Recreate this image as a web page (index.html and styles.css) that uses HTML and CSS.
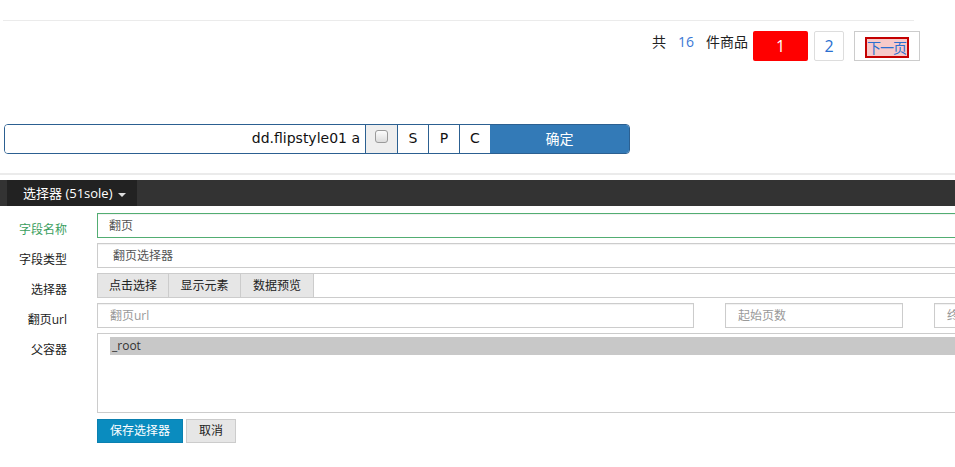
FILE: index.html
```html
<!DOCTYPE html>
<html lang="zh-CN">
<head>
<meta charset="utf-8">
<title>选择器</title>
<link rel="stylesheet" href="styles.css">
</head>
<body>
<div class="topline"></div>
<div class="pager">
  <span class="total">共<em>16</em>件商品</span>
  <a class="page current">1</a>
  <a class="page num">2</a>
  <a class="page next"><span>下一页</span></a>
</div>
<div class="selbar">
  <div class="selinput">dd.flipstyle01 a</div>
  <div class="cell chk"><span class="box"></span></div>
  <div class="cell">S</div>
  <div class="cell">P</div>
  <div class="cell">C</div>
  <div class="ok">确定</div>
</div>
<div class="sep"></div>
<div class="navbar">
  <div class="dropdown">选择器 (51sole) <span class="caret"></span></div>
</div>
<div class="form">
  <div class="label green">字段名称</div>
  <div class="field input focus">翻页</div>

  <div class="label">字段类型</div>
  <div class="field input indent">翻页选择器</div>

  <div class="label">选择器</div>
  <div class="field tabs">
    <span class="tab">点击选择</span>
    <span class="tab">显示元素</span>
    <span class="tab">数据预览</span>
  </div>

  <div class="label">翻页url</div>
  <div class="field multi">
    <div class="input ph url">翻页url</div>
    <div class="input ph start">起始页数</div>
    <div class="input ph end">终止页数</div>
  </div>

  <div class="label">父容器</div>
  <div class="field select">
    <div class="option">_root</div>
  </div>

  <div class="label"></div>
  <div class="field buttons">
    <span class="btn save">保存选择器</span>
    <span class="btn cancel">取消</span>
  </div>
</div>
</body>
</html>
```

FILE: styles.css
```css
html, body {
  margin: 0;
  padding: 0;
  background: #fff;
  overflow: hidden;
}
body {
  width: 955px;
  height: 467px;
  font-family: "Open Sans", "Noto Sans CJK SC", sans-serif;
  color: #333;
}

.topline {
  margin: 20px 0 0 3px;
  width: 911px;
  height: 1px;
  background: #ebebeb;
}

.pager {
  display: flex;
  justify-content: flex-end;
  align-items: flex-start;
  margin-top: 10px;
  padding-right: 35px;
  font-size: 14px;
}
.total {
  line-height: 22px;
  color: #222;
  margin-right: 5px;
}
.total em {
  font-style: normal;
  color: #3a78d6;
  margin: 0 12px;
}
.page {
  box-sizing: border-box;
  height: 30px;
  display: flex;
  align-items: center;
  justify-content: center;
  font-size: 16px;
}
.page.current {
  width: 55px;
  background: #ff0000;
  color: #fff;
  border-radius: 2px;
  margin-right: 6px;
}
.page.num {
  width: 30px;
  border: 1px solid #ddd;
  border-radius: 2px;
  color: #2a6fd0;
  margin-right: 10px;
}
.page.next {
  width: 66px;
  border: 1px solid #ccc;
  align-items: flex-start;
  padding-top: 5px;
}
.page.next span {
  display: block;
  box-sizing: border-box;
  height: 21px;
  border: 2px solid #c40000;
  background: #f6c9c9;
  color: #2a6fd0;
  font-size: 14px;
  line-height: 17px;
  letter-spacing: -1px;
  padding: 0 1px 0 0;
}

.selbar {
  display: flex;
  box-sizing: border-box;
  margin: 63px 0 0 4px;
  width: 626px;
  height: 30px;
  border: 1px solid #2c6091;
  border-radius: 4px;
  overflow: hidden;
  font-family: "DejaVu Sans", sans-serif;
  font-size: 14px;
  color: #111;
}
.selinput {
  flex: 0 0 360px;
  box-sizing: border-box;
  text-align: right;
  padding-right: 5px;
  line-height: 27px;
  background: #fff;
}
.cell {
  flex: 0 0 31px;
  box-sizing: border-box;
  border-left: 1px solid #2c6091;
  text-align: center;
  line-height: 27px;
  background: #fff;
}
.cell.chk {
  flex-basis: 32px;
  background: #eee;
  display: flex;
  justify-content: center;
  padding-top: 5px;
}
.box {
  display: block;
  width: 11px;
  height: 11px;
  border: 1px solid #9a9a9a;
  border-radius: 3px;
  background: linear-gradient(#fcfcfc, #dcdcdc);
}
.ok {
  flex: 1;
  background: #337ab7;
  color: #fff;
  text-align: center;
  line-height: 27px;
  font-family: "Noto Sans CJK SC", sans-serif;
  font-size: 14px;
}

.sep {
  margin-top: 19px;
  height: 2px;
  background: #ebebeb;
}
.navbar {
  margin-top: 5px;
  height: 26px;
  background: #333;
}
.dropdown {
  margin-left: 7px;
  width: 130px;
  box-sizing: border-box;
  height: 26px;
  background: #222;
  color: #fff;
  font-size: 13px;
  line-height: 26px;
  padding-left: 16px;
}
.caret {
  display: inline-block;
  width: 0;
  height: 0;
  border-left: 4px solid transparent;
  border-right: 4px solid transparent;
  border-top: 4px solid #ddd;
  vertical-align: middle;
  margin-left: 2px;
}

.form {
  display: grid;
  grid-template-columns: 67px 1000px;
  column-gap: 30px;
  row-gap: 5px;
  margin-top: 7px;
  font-size: 12px;
}
.label {
  text-align: right;
  padding-top: 8px;
  line-height: 17px;
  color: #222;
}
.label.green {
  color: #3a9e5e;
}
.input {
  box-sizing: border-box;
  height: 25px;
  border: 1px solid #ccc;
  box-shadow: inset 0 1px 1px rgba(0, 0, 0, 0.06);
  padding-left: 11px;
  line-height: 23px;
  color: #555;
  background: #fff;
}
.input.focus {
  border-color: #52ad72;
}
.input.indent {
  padding-left: 15px;
}
.tabs {
  display: flex;
  box-sizing: border-box;
  height: 25px;
  border: 1px solid #ccc;
}
.tab {
  width: 71px;
  box-sizing: border-box;
  border-right: 1px solid #ccc;
  background: #e6e6e6;
  text-align: center;
  line-height: 23px;
  color: #222;
}
.tab:nth-child(2) {
  width: 72px;
}
.tab:nth-child(3) {
  width: 73px;
}
.multi {
  display: grid;
  grid-template-columns: 597px 178px 1fr;
  column-gap: 31px;
}
.ph {
  color: #999;
  padding-left: 12px;
}
.select {
  box-sizing: border-box;
  height: 80px;
  border: 1px solid #ccc;
  padding: 3px 0 0 12px;
}
.option {
  height: 18px;
  line-height: 18px;
  background: #c8c8c8;
  padding-left: 2px;
  color: #333;
}
.buttons {
  display: flex;
  gap: 3px;
  margin-top: 1px;
}
.btn {
  box-sizing: border-box;
  height: 24px;
  line-height: 22px;
  text-align: center;
  border: 1px solid transparent;
}
.btn.save {
  width: 86px;
  background: #0a8cbf;
  color: #fff;
  border-color: #0a80b0;
}
.btn.cancel {
  width: 50px;
  background: #e6e6e6;
  border-color: #ccc;
  color: #222;
}
```
